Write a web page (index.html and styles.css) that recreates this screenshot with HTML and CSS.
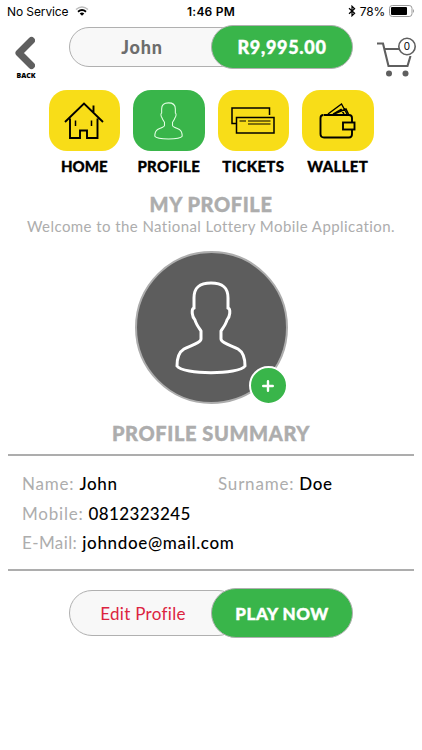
FILE: index.html
```html
<!DOCTYPE html>
<html lang="en">
<head>
  <meta charset="UTF-8">
  <meta name="viewport" content="width=device-width, initial-scale=1.0">
  <title>My Profile</title>
  <link rel="stylesheet" href="styles.css">
</head>
<body>

  <!-- person outline, shared by the tab and the avatar -->
  <svg class="defs" width="0" height="0">
    <symbol id="person" viewBox="0 0 72 94">
      <path d="M19 27V17C19 6 25 2 36 2S53 6 53 17V27C56 28 55 36 52 39C51 43 48 47 46 50V58C46 62 58 65 63 68C68 71 70 76 70 85C64 94 8 94 2 85C2 76 4 71 9 68C14 65 26 62 26 58V50C24 47 21 43 20 39C17 36 16 28 19 27Z"/>
    </symbol>
  </svg>

  <div class="status-bar">
    <div class="status-left">
      <span class="service">No Service</span>
      <svg class="wifi" width="14" height="10" viewBox="0 0 14 10">
        <path d="M1 3.5Q7-1.5 13 3.5" stroke="#bbb" stroke-width="1.6" fill="none"/>
        <path d="M3 5.7Q7 2.2 11 5.7" stroke="#000" stroke-width="1.8" fill="none"/>
        <path d="M4.7 7.4Q7 5.5 9.3 7.4L7 9.8Z"/>
      </svg>
    </div>
    <span class="time">1:46 PM</span>
    <div class="status-right">
      <svg width="8" height="12" viewBox="0 0 8 12"><path d="M1 3.3L6.6 8.3L4 10.8V1.2L6.6 3.7L1 8.7" fill="none" stroke="#000" stroke-width="1.2"/></svg>
      <span class="percent">78%</span>
      <svg width="26" height="12" viewBox="0 0 26 12">
        <rect x=".5" y=".5" width="22.5" height="11" rx="2.8" fill="none" stroke="#999"/>
        <rect x="2" y="2" width="16" height="8" rx="1"/>
        <path d="M24 4Q26 6 24 8Z" fill="#999"/>
      </svg>
    </div>
  </div>

  <header class="header">
    <div class="back">
      <svg width="20" height="34" viewBox="0 0 20 34"><path d="M16.5 4.5L4 17L16.5 29.5" fill="none" stroke="#5f5f5f" stroke-width="7" stroke-linecap="round" stroke-linejoin="round"/></svg>
      <span>BACK</span>
    </div>
    <div class="pill pill-top">
      <div class="pill-left name">John</div>
      <div class="pill-right balance">R9,995.00</div>
    </div>
    <svg class="cart" width="42" height="41" viewBox="0 0 42 41">
      <path d="M1 6.5H7L12.5 29H31.5L34.5 19M9 12H24" fill="none" stroke="#5f5f5f" stroke-width="2.1"/>
      <circle cx="13" cy="36.5" r="3" fill="#5f5f5f"/>
      <circle cx="29.5" cy="36.5" r="3" fill="#5f5f5f"/>
      <circle cx="31" cy="9.5" r="8.2" fill="#fff" stroke="#5f5f5f" stroke-width="1.6"/>
      <text x="31" y="13.3" text-anchor="middle">0</text>
    </svg>
  </header>

  <nav class="tabs">
    <div class="tab">
      <div class="tile">
        <svg width="42" height="40" viewBox="0 0 42 40" fill="none" stroke="#000" stroke-width="1.9">
          <path d="M2 21L21 2.5L40 21M7 17.5V37H17V29.5H24V37H34.5V17.5M30.5 11V4.5"/>
          <path d="M12.5 19.5V25M28.5 19.5V25" stroke-width="1.5"/>
        </svg>
      </div>
      <span class="home">HOME</span>
    </div>
    <div class="tab">
      <div class="tile active"><svg class="person-small" width="29" height="38"><use href="#person"/></svg></div>
      <span class="profile">PROFILE</span>
    </div>
    <div class="tab">
      <div class="tile">
        <svg width="44" height="28" viewBox="0 0 44 28" fill="none" stroke="#000" stroke-width="1.5">
          <path d="M5 16.5H1V1H38.5V8"/>
          <rect x="5.5" y="10.5" width="37.5" height="15.5"/>
          <path d="M8.5 14H15M17 14H39.5M17 17H39.5" stroke-width="1.2"/>
        </svg>
      </div>
      <span class="tickets">TICKETS</span>
    </div>
    <div class="tab">
      <div class="tile">
        <svg width="37" height="37" viewBox="0 0 37 37" fill="none" stroke="#000" stroke-width="1.9">
          <path d="M5 13H30Q33 13 33 16V20M33 28V32Q33 35.5 30 35.5H5Q1.5 35.5 1.5 32V16Q1.5 13 4.5 13"/>
          <rect x="24" y="20.5" width="11.5" height="7"/>
          <path d="M9 12L22.5 2L28 12M14 12L22 7.5L25 12M15 12L27 7L29.5 12" stroke-width="1.4"/>
        </svg>
      </div>
      <span class="wallet">WALLET</span>
    </div>
  </nav>

  <main>
    <h1>MY PROFILE</h1>
    <p class="welcome">Welcome to the National Lottery Mobile Application.</p>

    <div class="avatar">
      <svg class="person-large" width="72" height="94"><use href="#person"/></svg>
      <div class="add">
        <svg width="12" height="12" viewBox="0 0 12 12"><path d="M6 1.2V10.8M1.2 6H10.8" stroke="#fff" stroke-width="2.4" stroke-linecap="round"/></svg>
      </div>
    </div>

    <h2>PROFILE SUMMARY</h2>
    <div class="summary">
      <div class="field"><span class="label">Name:</span><span class="value">John</span></div>
      <div class="field"><span class="label">Surname:</span><span class="value">Doe</span></div>
      <div class="field wide"><span class="label">Mobile:</span><span class="value number">0812323245</span></div>
      <div class="field wide"><span class="label email">E-Mail:</span><span class="value">johndoe@mail.com</span></div>
    </div>

    <div class="pill pill-bottom">
      <div class="pill-left edit">Edit Profile</div>
      <div class="pill-right play">PLAY NOW</div>
    </div>
  </main>

</body>
</html>
```
FILE: styles.css
```css
* {
  box-sizing: border-box;
}
body {
  margin: 0;
  height: 750px;
  overflow: hidden;
  background-color: #fff;
  font-family: Lato, "Open Sans", sans-serif;
  color: #000;
}
span {
  white-space: nowrap;
}
svg {
  display: block;
}
.defs {
  display: none;
}
.status-bar {
  display: grid;
  grid-template-columns: 1fr 50px 1fr;
  align-items: center;
  height: 22px;
  padding: 0 7px;
  font-family: Inter, sans-serif;
  font-size: 12px;
}
.status-left,
.status-right {
  display: flex;
  align-items: center;
}
.status-left {
  gap: 6px;
}
.service {
  letter-spacing: -0.1px;
}
.status-right {
  justify-content: flex-end;
  gap: 4px;
}
.percent {
  letter-spacing: -0.2px;
}
.time {
  text-align: center;
  font-weight: 600;
  letter-spacing: 0.2px;
}
.header {
  display: flex;
  height: 68px;
}
.back {
  display: flex;
  flex-direction: column;
  align-items: center;
  width: 52px;
  padding-top: 14px;
}
.back svg {
  margin-right: 2px;
}
.back span {
  margin-top: 1px;
  font-family: "Open Sans", sans-serif;
  font-size: 7px;
  line-height: 9px;
  font-weight: 800;
}
.pill {
  display: flex;
  align-items: center;
  width: 284px;
}
.pill-left,
.pill-right {
  display: flex;
  align-items: center;
  justify-content: center;
  border: 1px solid #b0b0b0;
  border-radius: 30px;
  white-space: nowrap;
}
.pill-left {
  width: 172px;
  margin-right: -30px;
  padding-right: 26px;
  background-color: #f8f8f8;
}
.pill-right {
  width: 142px;
  z-index: 1;
  background-color: #39b54a;
  color: #fff;
  font-weight: 900;
  -webkit-text-stroke: 0.4px #fff;
}
.pill-top {
  height: 44px;
  margin: 3px 0 0 17px;
}
.pill-top .pill-left {
  height: 40px;
}
.pill-top .pill-right {
  height: 44px;
}
.name {
  color: #6d6d6d;
  font-weight: 900;
  font-size: 18px;
  letter-spacing: 0.8px;
}
.balance {
  font-size: 18px;
  letter-spacing: 0.7px;
}
.cart {
  margin: 15px 0 0 23px;
}
.cart text {
  font-family: Inter, sans-serif;
  font-size: 10px;
}
.tabs {
  display: flex;
  justify-content: center;
  gap: 13px;
}
.tab {
  display: flex;
  flex-direction: column;
  align-items: center;
  width: 71.5px;
}
.tab span {
  margin-top: 5px;
  font-size: 15px;
  line-height: 20px;
  font-weight: 900;
  letter-spacing: 0.3px;
  -webkit-text-stroke: 0.3px #000;
}
.tab .home {
  letter-spacing: 0;
}
.tile {
  display: flex;
  align-items: center;
  justify-content: center;
  width: 71.5px;
  height: 61px;
  border-radius: 18px;
  background-color: #f8dd18;
}
.tile.active {
  background-color: #39b54a;
}
.person-small {
  fill: none;
  stroke: #e4ffe5;
  stroke-width: 2.6;
}
h1,
h2 {
  margin: 0;
  height: 26px;
  line-height: 26px;
  text-align: center;
  font-size: 20px;
  font-weight: 900;
  letter-spacing: 0.6px;
  color: #adadad;
  -webkit-text-stroke: 0.4px #adadad;
}
h1 {
  margin-top: 15px;
}
.welcome {
  margin: -1px 0 0;
  line-height: 20px;
  text-align: center;
  white-space: nowrap;
  font-size: 15px;
  letter-spacing: 0.43px;
  color: #adadad;
}
.avatar {
  position: relative;
  display: flex;
  justify-content: center;
  width: 153px;
  height: 153px;
  margin: 15px auto 0;
  padding-top: 28px;
  border: 2px solid #adadad;
  border-radius: 50%;
  background-color: #5d5d5d;
}
.person-large {
  fill: none;
  stroke: #fff;
  stroke-width: 3;
}
.add {
  position: absolute;
  right: -2px;
  bottom: -3px;
  display: flex;
  align-items: center;
  justify-content: center;
  width: 39px;
  height: 39px;
  border: 2px solid #fff;
  border-radius: 50%;
  background-color: #39b54a;
}
h2 {
  margin-top: 16px;
}
.summary {
  display: grid;
  grid-template-columns: 196px 1fr;
  grid-auto-rows: 29.5px;
  height: 117px;
  margin: 8px 8px 0;
  padding: 13px 14px;
  border-top: 2px solid #adadad;
  border-bottom: 2px solid #adadad;
  font-size: 17px;
}
.field {
  display: flex;
  align-items: center;
  gap: 5px;
}
.wide {
  grid-column: 1 / 3;
}
.label {
  letter-spacing: 0.8px;
  color: #adadad;
}
.label.email {
  letter-spacing: 0.4px;
}
.value {
  font-weight: 500;
  letter-spacing: 0.65px;
}
.number {
  letter-spacing: 0.35px;
}
.pill-bottom {
  height: 50px;
  margin: 17px 0 0 69px;
}
.pill-bottom .pill-left {
  height: 46px;
}
.pill-bottom .pill-right {
  height: 50px;
}
.edit {
  padding-right: 24px;
  color: #dc2440;
  font-size: 17px;
  letter-spacing: 0.3px;
}
.play {
  font-size: 17px;
  letter-spacing: 0.5px;
}
```
